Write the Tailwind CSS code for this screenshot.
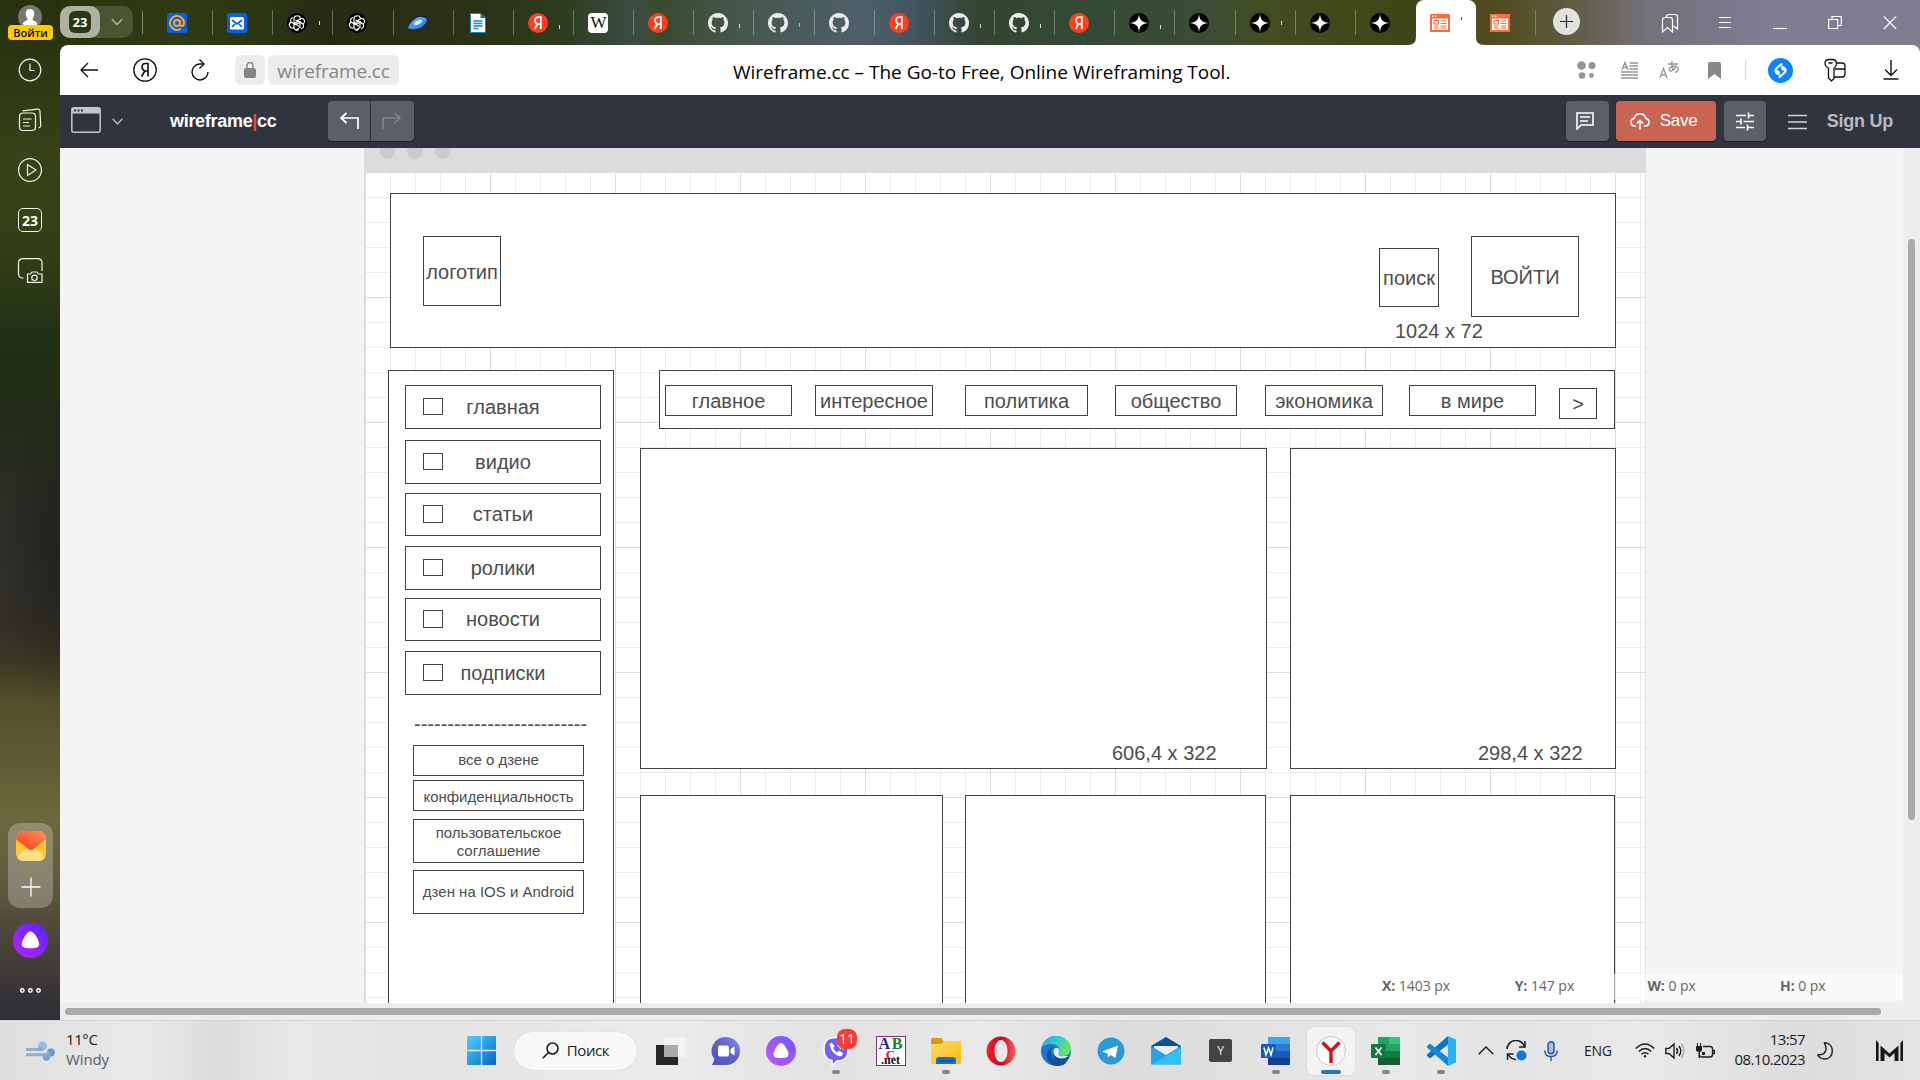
<!DOCTYPE html>
<html lang="ru">
<head>
<meta charset="utf-8">
<title>Wireframe.cc</title>
<script src="https://cdn.jsdelivr.net/npm/@tailwindcss/browser@4"></script>
</head>
<body class="w-[1920px] h-[1080px] overflow-hidden font-['Open_Sans','Noto_Sans',sans-serif]">
<svg class="absolute w-0 h-0">
  <defs>
    <linearGradient id="gw" x1="0" y1="0" x2="1" y2="1"><stop offset="0" stop-color="#4fd0ff"/><stop offset="1" stop-color="#0467c4"/></linearGradient>
    <linearGradient id="gal" x1="0" y1="1" x2="1" y2="0"><stop offset="0" stop-color="#b926ff"/><stop offset="1" stop-color="#5524ff"/></linearGradient>
    <linearGradient id="gal2" x1="0" y1="1" x2="1" y2="0"><stop offset="0" stop-color="#c455ff"/><stop offset="1" stop-color="#6a5cff"/></linearGradient>
    <linearGradient id="gop" x1="0" y1="0" x2="1" y2="0"><stop offset="0" stop-color="#fb1b35"/><stop offset=".5" stop-color="#c00c1d"/><stop offset="1" stop-color="#ff5a5a"/></linearGradient>
    <linearGradient id="ged" x1="0" y1="0" x2="1" y2=".4"><stop offset="0" stop-color="#2aa6e8"/><stop offset=".5" stop-color="#33c8d8"/><stop offset="1" stop-color="#6ce55a"/></linearGradient>
    <linearGradient id="gch" x1="0" y1="1" x2="1" y2="0"><stop offset="0" stop-color="#4453c4"/><stop offset=".6" stop-color="#6a62c8"/><stop offset="1" stop-color="#7fa0ee"/></linearGradient>
    <linearGradient id="gfo" x1="0" y1="0" x2="1" y2="1"><stop offset="0" stop-color="#ffdc66"/><stop offset="1" stop-color="#f9b916"/></linearGradient>
    <linearGradient id="gyd" x1="0" y1="0" x2="1" y2="1"><stop offset="0" stop-color="#6fbcff"/><stop offset="1" stop-color="#1574f0"/></linearGradient>
    <linearGradient id="gmr" x1="0" y1="1" x2="1" y2="0"><stop offset="0" stop-color="#fb3a12"/><stop offset="1" stop-color="#fb9060"/></linearGradient>
    <symbol id="ya" viewBox="0 0 20 20"><circle cx="10" cy="10" r="10" fill="#fc3f1d"/><path d="M12.800 16V4.200H10.300C8.200 4.200 7 5.500 7 7.400c0 1.700.8 2.600 2.300 3.600L6.600 16M12.700 11.200H10" fill="none" stroke="#fff" stroke-width="1.800"/></symbol>
    <symbol id="gh" viewBox="0 0 16 16"><path fill="#ececec" d="M8 0C3.580 0 0 3.580 0 8c0 3.540 2.290 6.530 5.470 7.590.4.07.55-.17.55-.38 0-.19-.01-.82-.01-1.490-2.010.37-2.530-.49-2.690-.94-.09-.23-.48-.94-.82-1.130-.28-.15-.68-.52-.01-.53.63-.01 1.080.58 1.230.82.72 1.210 1.870.87 2.330.66.07-.52.28-.87.51-1.070-1.780-.2-3.640-.89-3.640-3.950 0-.87.31-1.590.82-2.150-.08-.2-.36-1.020.08-2.120 0 0 .67-.21 2.200.82.64-.18 1.320-.27 2-.27s1.360.09 2 .27c1.530-1.040 2.200-.82 2.200-.82.44 1.100.16 1.920.08 2.120.51.56.82 1.270.82 2.150 0 3.070-1.870 3.750-3.650 3.950.29.25.54.73.54 1.480 0 1.070-.01 1.930-.01 2.200 0 .21.15.46.55.38A8.010 8.010 0 0 0 16 8c0-4.420-3.580-8-8-8z"/></symbol>
    <symbol id="star" viewBox="0 0 20 20"><circle cx="10" cy="10" r="10" fill="#000"/><path d="M10 0c.2 7 3 9.800 10 10-7 .2-9.800 3-10 10-.2-7-3-9.800-10-10 7-.2 9.800-3 10-10z" fill="#fff"/></symbol>
    <symbol id="gpt" viewBox="0 0 20 20"><circle cx="10" cy="10" r="10" fill="#000"/><g fill="none" stroke="#fff" stroke-width="1.200"><path d="M10 2.800a3 3 0 0 0-3 3v4.400l5 3M6 4.500a3 3 0 0 0-2 4.500l4.500 2.600 5.500-3M3.700 9.500a3 3 0 0 0 2 5.500l1.300-.3M7 11v3.500a3 3 0 0 0 4.800 2M9 17l4-2.500V9.500L8.500 7M14 15.700a3 3 0 0 0 2.200-4.500L11.500 8l-4.500 2.600M16.500 10.600a3 3 0 0 0-1.800-5.300L10 7.800M10 2.800a3 3 0 0 1 3.300 2.500"/></g></symbol>
    <symbol id="wf" viewBox="0 0 20 18"><path d="M0 0h20v18H0z" fill="#f0713f"/><path d="M2 4.500h16V16H2z" fill="#fff"/><path d="M2 1.500h1.500v1.200H2zM5 1.500h1.500v1.200H5z" fill="#fff"/><path d="M4 6.500h4.500V10H4zM10.500 7h6M10.500 9.500h6M4 12h4.500M10.500 12h6M4 14h4.500M10.500 14h6" fill="none" stroke="#f0713f" stroke-width="1.100"/></symbol>
  </defs>
</svg>

<div class="flex flex-col h-full">
<div class="flex h-[1020px]">

<!-- browser side panel -->
<aside class="w-[60px] h-full shrink-0 flex flex-col items-center text-white bg-[radial-gradient(ellipse_60px_160px_at_60px_560px,#00000048,#00000000),linear-gradient(180deg,#27300f_0%,#2c3812_7%,#384117_15%,#354116_22%,#2b3817_29%,#212f16_33%,#212b18_41%,#2c2d25_49%,#302f2a_56%,#322f27_61%,#3c3925_65%,#54502b_69%,#615b34_75%,#6d683c_80%,#625b40_86%,#48413a_93%,#323036_99%)]">
  <div class="relative h-[41px] w-full flex flex-col items-center pt-[5px] shrink-0">
    <svg class="w-6 h-6 shrink-0" viewBox="0 0 24 24"><circle cx="12" cy="12" r="12" fill="#77786f"/><path d="M12 4c3 0 4.500 2 4.300 5-.2 2.500-1.500 3.500-1.800 5 0 2 3.500 2 5 4.500C17 23 7 23 4.500 18.500c1.500-2.500 5-2.500 5-4.500-.3-1.500-1.600-2.500-1.800-5C7.500 6 9 4 12 4z" fill="#fff"/></svg>
    <div class="absolute left-2 top-[25px] w-[45px] h-[15px] rounded bg-[#fecb00] text-black text-[11px] font-semibold leading-[16px] text-center">Войти</div>
  </div>
  <div class="flex flex-col items-center mt-[17px]">
    <svg class="h-6 w-6 mb-[26px]" viewBox="0 0 24 24" fill="none" stroke="#f2f4ea" stroke-width="1.200"><circle cx="12" cy="12" r="10.800"/><path d="M12 5.500V12.500h4.500"/></svg>
    <svg class="h-6 w-6 mb-[26px]" viewBox="0 0 24 24" fill="none" stroke="#f2f4ea" stroke-width="1.200"><rect x="1.500" y="5" width="16" height="17.500" rx="3.500"/><path d="M4.500 2.800L19.500 1.200Q22 1 22 3.500l.7 14q0 2-2 2.300M5 11h8.500M5 14.500h6M5 18h7"/></svg>
    <svg class="h-6 w-6 mb-[26px]" viewBox="0 0 24 24" fill="none" stroke="#f2f4ea" stroke-width="1.200"><circle cx="12" cy="12" r="11.400"/><path d="M9.500 6.500v11l8.500-5.500z"/></svg>
    <div class="h-6 w-6 mb-[26px] border border-[#f2f4ea] rounded-[5px] text-[14px] font-bold leading-[23px] text-center">23</div>
    <svg class="h-[26px] w-[26px]" viewBox="0 0 26 26" fill="none" stroke="#f2f4ea" stroke-width="1.200"><path d="M6.500 20H6q-4.500 0-4.500-4.500V5Q1.500.7 6 .7h14.500Q25 .7 25 5v8"/><path d="M10.500 16h3l1.500-2h5l1.500 2h3.500v8.300H10.500z"/><circle cx="17.500" cy="19.800" r="2.700"/></svg>
  </div>
  <div class="mt-[539px] w-[45px] h-[85px] ml-[1px] rounded-xl bg-white/25 flex flex-col items-center pt-2">
    <svg class="w-[30px] h-[30px]" viewBox="0 0 30 30"><rect width="30" height="30" rx="8" fill="#ffc535"/><path d="M1 26L12 16h6l11 10q-2 4-7 4H8q-5 0-7-4z" fill="#ffdf82"/><path d="M0 8Q1 0 8 0h14q7 0 8 8L17 18.500q-2 1.300-4 0z" fill="url(#gmr)"/></svg>
    <svg class="w-5 h-5 mt-[16px]" viewBox="0 0 20 20" stroke="#fff" stroke-width="1.300"><path d="M10 .5v19M.5 10h19"/></svg>
  </div>
  <svg class="w-[35px] h-[35px] mt-[15px] ml-[1px] shrink-0" viewBox="0 0 35 35"><circle cx="17.500" cy="17.500" r="17.500" fill="url(#gal)"/><path d="M17.500 8.300c3.500 0 8.700 9 8.700 13 0 2.800-2.500 4-8.700 4s-8.700-1.200-8.700-4c0-4 5.200-13 8.700-13z" fill="#fff"/></svg>
  <svg class="w-6 h-6 mt-5 shrink-0" viewBox="0 0 24 24" fill="none" stroke="#fff" stroke-width="1.500"><circle cx="4.300" cy="12.500" r="1.700"/><circle cx="12.400" cy="12.500" r="1.700"/><circle cx="20.500" cy="12.500" r="1.700"/></svg>
</aside>

<div class="w-[1860px] h-full flex flex-col bg-[linear-gradient(90deg,#2a350f_0px,#2f3b12_130px,#2c3614_200px,#262a12_270px,#2b3316_420px,#2e3c1c_500px,#3a4c44_575px,#3a4a30_600px,#46574c_680px,#4e5f6a_800px,#435560_850px,#334530_920px,#344a34_1040px,#3c4c36_1150px,#424c1e_1210px,#404518_1350px,#534c20_1440px,#5a5638_1490px,#74717a_1590px,#7f7b92_1700px,#807c90_1860px)]">
  <!-- tab strip -->
  <div class="h-[45px] flex items-start shrink-0">
    <div class="mt-1.5 w-[73px] h-8 rounded-[10px] bg-white/15 flex items-center">
      <div class="w-10 h-8 rounded-[10px] bg-white/55 flex items-center justify-center">
        <div class="w-[22px] h-[22px] rounded-md bg-[#2a3712] text-white text-[13px] font-bold leading-[22px] text-center">23</div>
      </div>
      <svg class="w-3 h-2 ml-[11px]" viewBox="0 0 12 8" fill="none" stroke="#b5b9a9" stroke-width="1.300"><path d="M.8 1L6 6.500 11.200 1"/></svg>
    </div>
    <div class="ml-[9px] mt-[11px] w-px h-[23px] bg-white/40"></div>
    <div class="ml-2.5 flex w-[1263px] shrink-0 h-[45px] [&>div]:flex-1 [&>div]:flex [&>div]:items-center [&>div]:pl-[14px] [&>div]:h-[25px] [&>div]:mt-2.5 [&>div]:border-r [&>div]:border-white/30 [&_svg]:w-5 [&_svg]:h-5">
      <div><svg viewBox="0 0 20 20"><rect width="20" height="20" rx="2.500" fill="#0a5fe0"/><g fill="none" stroke="#f7a52b" stroke-width="2"><circle cx="10" cy="10" r="3"/><path d="M13 7v4.500q0 1.500 1.700 1.500c1.500 0 2.300-1.200 2.300-3a7 7 0 1 0-3 5.700"/></g></svg></div>
      <div><svg viewBox="0 0 20 20"><rect width="20" height="20" rx="2.500" fill="#0a5fe0"/><rect x="3" y="4" width="14" height="12.500" rx="1.500" fill="#fff"/><path d="M5 7l5 4 5-4M5 14l3-3M15 14l-3-3" fill="none" stroke="#0a5fe0" stroke-width="1.700"/></svg></div>
      <div><svg><use href="#gpt"/></svg><i class="ml-3 w-px h-1 bg-white/80"></i></div>
      <div><svg><use href="#gpt"/></svg></div>
      <div><svg viewBox="0 0 20 20"><path d="M5 7Q10 2 15 3q4 0 4 3l-3 4z" fill="#0c1424"/><path d="M0 15C3 8 9 3 14 4c6 0 6 4 2 8-5 5-12 5-16 3z" fill="url(#gyd)"/><ellipse cx="10" cy="9.500" rx="4.500" ry="2" transform="rotate(-28 10 9.500)" fill="#fff" opacity=".8"/></svg></div>
      <div><svg viewBox="0 0 20 20"><path d="M2.500.5h10l5 4.500v14.500h-15z" fill="#fff" stroke="#1b87b9"/><path d="M12.500 0l5.500 5h-5.500z" fill="#1b6c9c"/><path d="M5.500 8h9M5.500 10.500h9M5.500 13h9M5.500 15.500h5" stroke="#1b87b9" stroke-width="1.300"/></svg></div>
      <div><svg><use href="#ya"/></svg><i class="ml-[11px] mt-2 w-px h-1 bg-white/80"></i></div>
      <div><span class="w-5 h-5 rounded bg-white text-[#111] text-[17px] leading-[20px] text-center font-['Liberation_Serif',serif] tracking-tighter">W</span></div>
      <div><svg><use href="#ya"/></svg></div>
      <div><svg><use href="#gh"/></svg><i class="ml-[11px] mt-1.5 w-px h-1 bg-white/80"></i></div>
      <div><svg><use href="#gh"/></svg><i class="ml-[11px] mt-1 w-px h-1 bg-white/60"></i></div>
      <div><svg><use href="#gh"/></svg></div>
      <div><svg><use href="#ya"/></svg></div>
      <div><svg><use href="#gh"/></svg><i class="ml-[11px] mt-1.5 w-px h-1 bg-white/80"></i></div>
      <div><svg><use href="#gh"/></svg><i class="ml-[11px] mt-1.5 w-px h-1 bg-white/80"></i></div>
      <div><svg><use href="#ya"/></svg></div>
      <div><svg><use href="#star"/></svg><i class="ml-[11px] mt-2 w-px h-1 bg-white/80"></i></div>
      <div><svg><use href="#star"/></svg></div>
      <div><svg><use href="#star"/></svg><i class="ml-[11px] w-px h-1 bg-white/80"></i></div>
      <div><svg><use href="#star"/></svg></div>
      <div class="border-transparent!"><svg><use href="#star"/></svg></div>
    </div>
    <div class="relative w-[60px] h-[45px] bg-white rounded-t-lg flex items-center pl-3.5 shrink-0">
      <svg class="absolute -left-2 bottom-0 w-2 h-2" viewBox="0 0 8 8"><path d="M8 0v8H0q8 0 8-8z" fill="#fff"/></svg>
      <svg class="absolute -right-2 bottom-0 w-2 h-2" viewBox="0 0 8 8"><path d="M0 0v8h8Q0 8 0 0z" fill="#fff"/></svg>
      <svg class="w-5 h-[18px]"><use href="#wf"/></svg><i class="ml-[11px] -mt-2 w-px h-[3px] bg-black/70"></i>
    </div>
    <div class="w-[60px] h-[25px] mt-2.5 pl-3.5 flex items-center border-r border-white/25"><svg class="w-5 h-[18px]"><use href="#wf"/></svg></div>
    <div class="ml-[17px] mt-2 w-[27px] h-[27px] rounded-full bg-[#e2e2dc] flex items-center justify-center"><svg class="w-[13px] h-[13px]" viewBox="0 0 13 13" stroke="#222" stroke-width="1.200"><path d="M6.500 0v13M0 6.500h13"/></svg></div>
    <div class="ml-[81px] mt-3 flex items-center text-white [&>svg]:h-[22px] [&>svg]:fill-none [&>svg]:stroke-white [&>svg]:stroke-[1.200]">
      <svg class="w-[18px]" viewBox="0 0 18 22"><path d="M1.500 8q0-2.500 2.500-2.500h5q2.500 0 2.500 2.500v12l-5-4.500-5 4.500zM5.500 5.500V5q0-2.500 2.500-2.500h6q2.500 0 2.500 2.500v12l-4-3"/></svg>
      <svg class="w-[14px] ml-[39px]" viewBox="0 0 14 22"><path d="M1 5.500h12M1 10.500h12M1 15.500h12"/></svg>
      <svg class="w-[14px] ml-[41px]" viewBox="0 0 14 22"><path d="M0 16.500h14"/></svg>
      <svg class="w-[14px] ml-[41px]" viewBox="0 0 14 22"><path d="M.6 7.500h9v9h-9zM4 7V4.500h9.300v9H10"/></svg>
      <svg class="w-[14px] ml-[41px]" viewBox="0 0 14 22"><path d="M.8 4.300L13.200 17M13.200 4.300L.8 17"/></svg>
    </div>
  </div>

  <!-- address bar -->
  <div class="h-[50px] bg-white rounded-t-[8px] flex items-center shrink-0">
    <svg class="w-[18px] h-4 ml-5" viewBox="0 0 18 16" fill="none" stroke="#111" stroke-width="1.300"><path d="M18 8H1M8 1L1 8l7 7"/></svg>
    <svg class="w-6 h-6 ml-[35px]" viewBox="0 0 24 24" fill="none" stroke="#111" stroke-width="1.300"><circle cx="12" cy="12" r="11.200"/><path d="M15 18.500V5.500h-2.500C10.200 5.500 9 7 9 9s1 3 2.800 4L8.600 18.500M15 13h-3" stroke-width="1.600"/></svg>
    <svg class="w-[22px] h-[24px] ml-[32px]" viewBox="0 0 22 24" fill="none" stroke="#111" stroke-width="1.400"><path d="M13.500 6H10.500A8 8 0 1 0 19 14M10.500 1.500L15 6l-4.500 4.500"/></svg>
    <div class="ml-[24px] w-[30px] h-[30px] rounded-md bg-[#ececec] flex items-center justify-center"><svg class="w-3 h-4" viewBox="0 0 12 16"><rect y="6" width="12" height="10" rx="2" fill="#858585"/><path d="M3 7V3.500a3 3 0 0 1 6 0V7" fill="none" stroke="#858585" stroke-width="1.400"/></svg></div>
    <div class="ml-[3px] w-[131px] h-[30px] rounded-md bg-[#ececec] text-[#868686] text-[19px] leading-[33px] text-center whitespace-nowrap tracking-[-0.15px]">wireframe.cc</div>
    <div class="ml-[334px] w-[500px] pt-[3px] text-[19px] text-black whitespace-nowrap tracking-[-0.02px] leading-[30px]">Wireframe.cc – The Go-to Free, Online Wireframing Tool.</div>
    <svg class="ml-[344px] w-[19px] h-5" viewBox="0 0 19 20" fill="#949494"><circle cx="4.500" cy="5.500" r="4.300"/><circle cx="15" cy="5.500" r="3.500"/><circle cx="5" cy="15.500" r="3.200"/><circle cx="14.500" cy="15.500" r="2.400"/></svg>
    <svg class="ml-[25px] w-[17px] h-[18px]" viewBox="0 0 17 18" fill="none" stroke="#949494" stroke-width="1.300"><path d="M1 9L4 1.500 7 9M2 6.500h4M8.500 2H17M8.500 5H17M8.500 8H17M0 11h17M0 14h17M0 17h17"/></svg>
    <svg class="ml-[21px] w-[21px] h-5" viewBox="0 0 21 20" fill="none" stroke="#949494" stroke-width="1.300"><path d="M1 18L4.500 8.500 8 18M2.200 15h4.600M9 4h10M13 1q-.5 6 1 9M17.500 5.500C16 10 12 12 10.500 10.500 9 8 14 5.500 17 6.500c3.500 1 3 5-1 6"/></svg>
    <svg class="ml-7 w-[13px] h-[17px]" viewBox="0 0 13 17"><path d="M0 2q0-2 2-2h9q2 0 2 2v15l-6.500-5L0 17z" fill="#888"/></svg>
    <div class="ml-6 w-px h-5 bg-gray-300"></div>
    <svg class="ml-[22px] w-[25px] h-[25px]" viewBox="0 0 25 25"><circle cx="12.500" cy="12.500" r="12.500" fill="#0a84ff"/><path d="M10.800 16.300C7 15 6.500 11.800 9 9.800L13.500 6M14.200 8.700c3.800 1.300 4.300 4.500 1.800 6.500L11.500 19M9.500 13.200l1.300 1.200M15.500 11.800l-1.300-1.200" fill="none" stroke="#fff" stroke-width="2.200" stroke-linecap="round"/></svg>
    <svg class="ml-[30px] w-[24px] h-[24px]" viewBox="0 0 24 24" fill="none" stroke="#111" stroke-width="1.300"><path d="M6.500 1.500h3q4 0 4 4 0 3-2.500 4.500v10.500L8.500 23 5.500 20V10Q2 8.500 2 5q0-3.500 4.500-3.500zM5.500 5h4M13.500 5H19q3 0 3 3v8q0 3-3 3h-8M12 11h10"/></svg>
    <svg class="ml-[36px] w-4 h-5" viewBox="0 0 16 20" fill="none" stroke="#111" stroke-width="1.400"><path d="M8 0v15M2 9.500l6 6 6-6M.5 19h15"/></svg>
  </div>

  <!-- editor toolbar -->
  <div class="h-[53px] bg-[#30343f] flex items-start pt-1.5 shrink-0 font-['Liberation_Sans',sans-serif]">
    <svg class="ml-[11px] mt-1.5 w-[30px] h-[26px]" viewBox="0 0 30 26"><rect x=".8" y=".8" width="28.400" height="24.400" rx="2" fill="none" stroke="#c3c7cc" stroke-width="1.500"/><path d="M1 1h28v5.500H1z" fill="#c3c7cc"/><path d="M3 2.500h2v2H3zM6.500 2.500h2v2h-2zM10 2.500h2v2h-2z" fill="#30343f"/></svg>
    <svg class="ml-[11px] mt-[17px] w-[11px] h-[7px]" viewBox="0 0 11 7" fill="none" stroke="#b8bcc4" stroke-width="1.300"><path d="M.7.7L5.500 6 10.300.7"/></svg>
    <div class="ml-[47px] w-[158px] text-[18px] leading-[40px] font-bold text-white tracking-[-0.3px] whitespace-nowrap">wireframe<span class="text-[#e0533f]">|</span>cc</div>
    <div class="w-[42px] h-10 rounded-l bg-[#5c5f68] shadow-[0_1px_1px_#1b1d23] flex items-center justify-center"><svg class="w-5 h-[18px] ml-0.5" viewBox="0 0 20 18" fill="none" stroke="#fff" stroke-width="1.700"><path d="M6.500 1L1 6l5.500 5M1 6h17v11"/></svg></div>
    <div class="ml-px w-[43px] h-10 rounded-r bg-[#5c5f68] shadow-[0_1px_1px_#1b1d23] flex items-center justify-center"><svg class="w-5 h-[18px] -ml-1" viewBox="0 0 20 18" fill="none" stroke="#83868d" stroke-width="1.600"><path d="M13.500 1L19 6l-5.500 5M19 6H2v11"/></svg></div>
    <div class="ml-auto w-[43px] h-10 rounded bg-[#5c5f68] shadow-[0_1px_1px_#1b1d23] flex items-center justify-center"><svg class="w-[18px] h-[18px] -ml-1" viewBox="0 0 18 18" fill="none" stroke="#fff" stroke-width="1.600"><path d="M1 1h16v12H5l-4 4zM4 5h10M4 9h8"/></svg></div>
    <div class="ml-[7px] w-[100px] h-10 rounded bg-[#c76552] shadow-[0_1px_1px_#1b1d23] flex items-center pl-3.5 text-white text-[17px] tracking-[-0.3px]"><svg class="w-5 h-[18px] mr-[10px]" viewBox="0 0 20 18" fill="none" stroke="#fff" stroke-width="1.600"><path d="M6 14H4.500A3.800 3.800 0 0 1 4 6.500 6.200 6.200 0 0 1 16 6.500 3.800 3.800 0 0 1 15.500 14H14M10 17.500V8.500M6.800 11.500L10 8.300l3.200 3.200"/></svg>Save</div>
    <div class="ml-2 w-[42px] h-10 rounded bg-[#5c5f68] shadow-[0_1px_1px_#1b1d23] flex items-center justify-center"><svg class="w-[18px] h-[19px]" viewBox="0 0 18 19" fill="none" stroke="#fff" stroke-width="1.600"><path d="M0 3.500h10M12.500 3.500H18M12.500.5v6M0 9.500h5M7.500 9.500H18M5 6.500v6M0 15.500h9M11.500 15.500H18M11.500 12.500v6"/></svg></div>
    <svg class="ml-[22px] mt-[13px] w-[19px] h-4" viewBox="0 0 19 16" stroke="#d0d2d6" stroke-width="1.600"><path d="M0 1.500h19M0 8h19M0 14.500h19"/></svg>
    <div class="ml-5 mr-[27px] text-[18px] leading-[40px] font-bold text-[#b9bbc0] tracking-[-0.25px] whitespace-nowrap">Sign Up</div>
  </div>

  <!-- wireframe canvas -->
  <div class="flex h-[855px] shrink-0">
    <div class="relative w-[1843px] bg-[#f4f4f4] overflow-hidden font-['Liberation_Sans',sans-serif] text-[20px] leading-[23px] text-[#4d4d4d] [&_b]:absolute [&_b]:font-normal [&_b]:bg-white [&_b]:border [&_b]:border-[#424242] [&_b]:flex [&_b]:items-center [&_b]:justify-center [&_b]:text-center [&_b]:whitespace-nowrap">
      <div class="absolute left-[304px] top-0 w-[1282px] h-[25px] bg-[#dcdcdc] overflow-hidden">
        <div class="flex gap-[12px] pl-4 -mt-1"><i class="w-[15px] h-[15px] rounded-full bg-[#cacaca]"></i><i class="w-[16px] h-[15px] rounded-full bg-[#cacaca]"></i><i class="w-[15px] h-[15px] rounded-full bg-[#cacaca]"></i></div>
      </div>
      <div class="absolute left-[304px] top-[25px] w-[1282px] h-[830px] bg-white border-x border-[#dedede]">
        <svg class="w-full h-full" shape-rendering="crispEdges"><defs>
          <pattern id="gmin" x="0" y="24" width="25" height="25" patternUnits="userSpaceOnUse"><path d="M0 .5H25M.5 0V25" stroke="#ececec"/></pattern>
          <pattern id="gmaj" x="0" y="124" width="125" height="125" patternUnits="userSpaceOnUse"><path d="M0 .5H125M.5 0V125" stroke="#dcdcdc"/></pattern></defs>
          <rect width="1280" height="830" fill="url(#gmin)"/><rect width="1280" height="830" fill="url(#gmaj)"/></svg>
      </div>
      <!-- header -->
      <b class="left-[330px] top-[45px] w-[1226px] h-[155px]"></b>
      <b class="left-[363px] top-[88px] w-[78px] h-[70px] pt-[3px]">логотип</b>
      <b class="left-[1319px] top-[100px] w-[60px] h-[59px] pt-0.5">поиск</b>
      <b class="left-[1411px] top-[88px] w-[108px] h-[81px] pt-0.5">ВОЙТИ</b>
      <span class="absolute left-[1335px] top-[172px]">1024 x 72</span>
      <!-- side menu -->
      <b class="left-[328px] top-[222px] w-[226px] h-[700px]"></b>
      <b class="left-[345px] top-[237px] w-[196px] h-[44px]">главная</b><b class="left-[363px] top-[250px] w-5 h-[17px]"></b>
      <b class="left-[345px] top-[292px] w-[196px] h-[44px]">видио</b><b class="left-[363px] top-[305px] w-5 h-[17px]"></b>
      <b class="left-[345px] top-[345px] w-[196px] h-[43px]">статьи</b><b class="left-[363px] top-[357px] w-5 h-[18px]"></b>
      <b class="left-[345px] top-[398px] w-[196px] h-[44px]">ролики</b><b class="left-[363px] top-[411px] w-5 h-[17px]"></b>
      <b class="left-[345px] top-[450px] w-[196px] h-[43px]">новости</b><b class="left-[363px] top-[462px] w-5 h-[18px]"></b>
      <b class="left-[345px] top-[503px] w-[196px] h-[44px]">подписки</b><b class="left-[363px] top-[516px] w-5 h-[17px]"></b>
      <span class="absolute left-[354px] top-[565px]">--------------------------</span>
      <b class="left-[353px] top-[597px] w-[171px] h-[31px] text-[15px] pb-0.5">все о дзене</b>
      <b class="left-[353px] top-[632px] w-[171px] h-[31px] text-[15px] pt-0.5">конфиденциальность</b>
      <b class="left-[353px] top-[671px] w-[171px] h-[44px] text-[15px] leading-[18px] pt-0.5">пользовательское<br>соглашение</b>
      <b class="left-[353px] top-[722px] w-[171px] h-[44px] text-[15px] pb-0.5">дзен на IOS и Android</b>
      <!-- categories -->
      <b class="left-[599px] top-[222px] w-[956px] h-[59px]"></b>
      <b class="left-[605px] top-[237px] w-[127px] h-[31px] pt-0.5">главное</b>
      <b class="left-[755px] top-[237px] w-[118px] h-[31px] pt-0.5">интересное</b>
      <b class="left-[905px] top-[237px] w-[123px] h-[31px] pt-0.5">политика</b>
      <b class="left-[1055px] top-[237px] w-[122px] h-[31px] pt-0.5">общество</b>
      <b class="left-[1205px] top-[237px] w-[118px] h-[31px] pt-0.5">экономика</b>
      <b class="left-[1349px] top-[237px] w-[127px] h-[31px] pt-0.5">в мире</b>
      <b class="left-[1499px] top-[240px] w-[38px] h-[31px] pt-0.5">&gt;</b>
      <!-- cards -->
      <b class="left-[580px] top-[300px] w-[627px] h-[321px]"></b>
      <span class="absolute left-[1052px] top-[594px]">606,4 x 322</span>
      <b class="left-[1230px] top-[300px] w-[326px] h-[321px]"></b>
      <span class="absolute left-[1418px] top-[594px]">298,4 x 322</span>
      <b class="left-[580px] top-[647px] w-[303px] h-[300px]"></b>
      <b class="left-[905px] top-[647px] w-[301px] h-[300px]"></b>
      <b class="left-[1230px] top-[647px] w-[325px] h-[300px]"></b>
      <!-- pointer read-out -->
      <div class="absolute left-[1308px] top-[826px] w-[540px] h-[26px] bg-white/55 flex pl-[14px] font-['Open_Sans',sans-serif] text-[14px] leading-[24px] text-[#666] tracking-[-0.05px] [&>div]:w-[132.700px] [&>div]:shrink-0">
        <div><strong>X:</strong> 1403 px</div><div><strong>Y:</strong> 147 px</div><div><strong>W:</strong> 0 px</div><div><strong>H:</strong> 0 px</div>
      </div>
    </div>
    <div class="w-[17px] bg-[#ededed] pt-[91px] pl-[5px]"><div class="w-[7px] h-[581px] rounded-full bg-[#a9a9a9]"></div></div>
  </div>
  <div class="h-[17px] shrink-0 bg-[#ededed] pt-[5px] pl-[5px]"><div class="w-[1816px] h-[7px] rounded-full bg-[#a9a9a9]"></div></div>
</div>
</div>

<!-- taskbar -->
<footer class="h-[60px] flex items-center border-t border-[#d4d4d4] text-[#1c1c1c] bg-[linear-gradient(90deg,#dfdfdf_0px,#e9e9e9_140px,#dcdcdc_220px,#e8e8e8_290px,#e3e3e3_420px,#ebebeb_660px,#e2e2e2_850px,#e9e9e9_980px,#dcdcdc_1120px,#e8e8e8_1400px,#e3e3e3_1500px,#e9e9e9_1640px,#dddddd_1800px,#e3e3e3_1920px)]">
  <svg class="ml-[26px] w-[29px] h-5 shrink-0" viewBox="0 0 29 20"><path d="M0 7h13V10H0zM0 12.300h22v3H0z" fill="#8fb0d0"/><circle cx="16.500" cy="5" r="4.500" fill="#9dbbd8"/><circle cx="25" cy="11.500" r="3.900" fill="#7199c0"/><circle cx="20.500" cy="16" r="3.700" fill="#7ba2c8"/><path d="M11 7l4-1 3 3-3 1h-4zM19 12.300l5-2v5h-5z" fill="#85a9cc"/></svg>
  <div class="ml-[11px] -mt-[3px] w-[398px] shrink-0 text-[15px] leading-5 tracking-[-0.4px]"><div>11°C</div><div class="text-[#5c5c5c] tracking-[-0.1px]">Windy</div></div>
  <svg class="ml-[3px] w-[29px] h-[29px] shrink-0" viewBox="0 0 29 29" fill="url(#gw)"><path d="M1 0h27q1 0 1 1v27q0 1-1 1H1q-1 0-1-1V1q0-1 1-1z"/><path d="M14.500 0v29M0 14.500h29" stroke="#e6e6e6" stroke-width="1.300"/></svg>
  <div class="ml-[18px] w-[123px] h-[38px] rounded-full bg-[#f8f8f8] shadow-[0_0_1px_#bbb] flex items-center justify-center gap-2 text-[15px] shrink-0 tracking-[-0.4px]"><svg class="w-[17px] h-[17px]" viewBox="0 0 17 17" fill="none" stroke="#1c1c1c" stroke-width="1.600"><circle cx="10.500" cy="6.500" r="5.500"/><path d="M6.500 10.500L.8 16.200"/></svg>Поиск</div>
  <div class="ml-[6px] flex shrink-0 h-[59px] [&>div]:relative [&>div]:w-[55px] [&>div]:flex [&>div]:items-center [&>div]:justify-center [&_svg]:w-[30px] [&_svg]:h-[30px] [&_i]:absolute [&_i]:bottom-[6px] [&_i]:h-1 [&_i]:w-2 [&_i]:rounded-full [&_i]:bg-[#858585]">
    <div><svg viewBox="0 0 30 30"><path d="M0 9h22v20H0z" fill="#272727"/><path d="M8 1h22v20H8z" fill="#f3f3f3"/><path d="M8 9h14v12H8z" fill="#aaa"/></svg></div>
    <div><svg viewBox="0 0 30 30"><path d="M15 1a14 14 0 1 1 0 28H1l2.500-5.500A14 14 0 0 1 15 1z" fill="url(#gch)"/><rect x="7" y="9.500" width="11" height="11" rx="2" fill="#fff"/><path d="M19.500 13l4-2.500v9l-4-2.500z" fill="#fff"/></svg></div>
    <div><svg viewBox="0 0 30 30"><circle cx="15" cy="15" r="15" fill="url(#gal2)"/><path d="M15 7c3 0 7.500 8 7.500 11.500 0 2.500-2 3.500-7.500 3.500s-7.500-1-7.500-3.500C7.500 15 12 7 15 7z" fill="#fff"/></svg></div>
    <div><svg viewBox="0 0 30 30"><path d="M15 1.500c8 0 12 3 12 12S23 25 16 25l-5 4.500V24.500C5 23.500 3 20 3 13.500c0-9 4-12 12-12z" fill="#7360f2" stroke="#fff" stroke-width="1.500"/><path d="M8.500 8.500l2-2 3 3.500-1.300 2.200q1.500 3 4.300 4l2-1.500 3.700 2.500q-1.200 3.500-3.700 3Q10.500 18 8.500 8.500z" fill="#fff"/><path d="M16 6.500q5.500 1 6 7M16.500 9.500q3 .5 3 3.500" fill="none" stroke="#fff" stroke-width="1.100"/></svg><i></i><span class="absolute left-[29px] top-2 w-5 h-5 rounded-[8px] bg-[#fb3b30] text-white text-[14px] leading-[19px] text-center">11</span></div>
    <div><span class="w-[30px] h-[30px] bg-white border border-[#8a2a86] font-['Liberation_Serif',serif] font-bold flex flex-col overflow-hidden"><span class="flex justify-between px-0.5 h-[13px] text-[16px] leading-[14px]"><span class="text-[#1c2a90]">A</span><span class="text-[#15802f]">B</span></span><span class="h-[7px] text-center text-[13px] leading-[9px] text-[#e01525]">C</span><span class="text-center text-[12px] leading-[6px] text-[#111]">.net</span></span></div>
    <div><svg viewBox="0 0 30 30"><path d="M0 3.500Q0 2 1.500 2H10l3 3.500V10H0z" fill="#d79a10"/><path d="M0 8h10l3-3h17v21.500q0 1.500-1.500 1.500h-27Q0 28 0 26.500z" fill="url(#gfo)"/><path d="M5 28v-4q0-3 3-3h14q3 0 3 3v4z" fill="#1272c4"/><path d="M8 25h14" stroke="#0a4a90" stroke-width="1.400"/></svg><i></i></div>
    <div><svg viewBox="0 0 30 30"><path fill-rule="evenodd" d="M15 .5a14.500 14.500 0 1 1 0 29 14.500 14.500 0 0 1 0-29zM15 4c-4 0-6.500 5-6.500 11S11 26 15 26s6.500-5 6.500-11S19 4 15 4z" fill="url(#gop)"/></svg></div>
    <div><svg viewBox="0 0 30 30"><circle cx="15" cy="15" r="15" fill="#1b77cf"/><path d="M.5 12C2 4.500 8 0 15 0c8 0 15 5.500 15 12.500 0 4.500-3.500 7.500-8 7.500-3.500 0-5-1-5-2 0-.8 1.500-1.500 1.500-4 0-3-3-6-8-6-4.500 0-8.500 2-10 4z" fill="url(#ged)"/><path d="M10 15c0 7 6 13 12 12.500 2 0 4-1 5-2C24.500 28.500 20 30 16 30 9 29.500 4 23 6.500 16 8 12.500 11 11 13.500 11 11.500 12 10 13.500 10 15z" fill="#12509c"/><path d="M12.500 15.500c0-2 1.500-4.500 4-3.500 2.500 1.500 2 3.500.8 5.500-.6 1.500 2 3.500 6 2.500h5c-3 4-8 5-12 3-2.500-1.500-3.800-4-3.800-7.500z" fill="#e4eef2"/><path d="M12.500 16c.5 5 6 7.500 11 6 2-.6 3.500-1.500 5-2.500-1 4-4 8-7 8.500-6 .5-10-6-9-12z" fill="#12509c"/></svg></div>
    <div><svg viewBox="0 0 30 30"><circle cx="15" cy="15" r="13.500" fill="#2a9ad6"/><path d="M6 15.500L22 9.500 19.500 22l-5-3-2.500 2.500-.5-4z" fill="#fff"/></svg></div>
    <div><svg viewBox="0 0 30 30"><path d="M0 10L15 1l15 9v5H0z" fill="#0c4f9b"/><path d="M3 10h24v10H3z" fill="#ededed"/><path d="M0 10l15 9 15-9v18.500H0z" fill="#2ba3ea"/><path d="M0 28.500L30 12v16.500z" fill="#35c0f5"/></svg></div>
    <div><span class="w-[23px] h-[23px] bg-[#444] rounded-[2px] text-[#eee] text-[12px] leading-[23px] text-center">Y</span></div>
    <div><svg viewBox="0 0 30 30"><path d="M7 1h22v7H7z" fill="#41a5ee"/><path d="M7 8h22v7H7z" fill="#2b7cd3"/><path d="M7 15h22v7H7z" fill="#185abd"/><path d="M7 22h22v7H7z" fill="#103f91"/><rect y="8" width="15" height="14" rx="1" fill="#185abd"/><path d="M3 11.500L5 19l2.500-7L10 19l2-7.500" fill="none" stroke="#fff" stroke-width="1.500"/></svg><i></i></div>
    <div><span class="w-12 h-12 rounded-md bg-[#f4f4f4] shadow-[0_0_1px_#aaa] flex items-center justify-center"><svg viewBox="0 0 30 30"><circle cx="15" cy="15" r="14.500" fill="#fafafa" stroke="#bbb" stroke-width=".8"/><path d="M6.500 6.500L15 15l8.500-8.500M15 14v13" fill="none" stroke="#cc1417" stroke-width="3.400"/></svg></span><i class="w-5! bg-[#1976d2]!"></i></div>
    <div><svg viewBox="0 0 30 30"><path d="M7 1h22v7H7z" fill="#33c481"/><path d="M7 1h11v7H7z" fill="#21a366"/><path d="M7 8h22v7H7z" fill="#21a366"/><path d="M7 15h22v7H7z" fill="#107c41"/><path d="M7 22h22v7H7z" fill="#185c37"/><rect y="8" width="15" height="14" rx="1" fill="#107c41"/><path d="M4.500 11.500l6 7.500M10.500 11.500l-6 7.500" stroke="#fff" stroke-width="1.700"/></svg><i></i></div>
    <div><svg viewBox="0 0 30 30"><path d="M22 0l8 3.500v23L22 30z" fill="#2fb0f5"/><path d="M22 0v8.500L4 22.500 1 20v-1.500z" fill="#0a74c4"/><path d="M22 30v-8.500L4 7.500 1 10v1.500z" fill="#1688d8"/></svg><i></i></div>
  </div>
  <svg class="ml-[10px] w-4 h-[9px] shrink-0" viewBox="0 0 16 9" fill="none" stroke="#1c1c1c" stroke-width="1.400"><path d="M.7 8.300L8 1l7.300 7.300"/></svg>
  <svg class="ml-3 w-[21px] h-[21px] shrink-0" viewBox="0 0 21 21" fill="none" stroke="#1c1c1c" stroke-width="1.500"><path d="M1 9A9 9 0 0 1 18.500 6.500M19 1v6h-6M1.500 20v-6h6M2 14q3 5.500 8 5.500"/><circle cx="15.500" cy="15.500" r="5" fill="#0f78d4" stroke="none"/></svg>
  <svg class="ml-[17px] w-[14px] h-5 shrink-0" viewBox="0 0 14 20" fill="none" stroke="#1f4fa0" stroke-width="1.400"><rect x="4" y=".8" width="6" height="12" rx="3" fill="#a9bce0"/><path d="M.8 9.500q0 6 6.200 6t6.200-6M7 15.500V20"/></svg>
  <div class="ml-[26px] w-[30px] text-[14px] shrink-0 tracking-[-0.3px]">ENG</div>
  <svg class="ml-[21px] w-5 h-[15px] shrink-0" viewBox="0 0 20 15" fill="none" stroke="#1c1c1c" stroke-width="1.500"><path d="M.8 5.500q9.200-9 18.400 0M3.800 8.500q6.200-6 12.400 0M6.500 11.300q3.500-3.200 7 0"/><circle cx="10" cy="13.300" r="1.200" fill="#1c1c1c" stroke="none"/></svg>
  <svg class="ml-2.5 w-5 h-[18px] shrink-0" viewBox="0 0 20 18" fill="none" stroke="#1c1c1c" stroke-width="1.400"><path d="M.8 6.500H4L9 2v14l-5-4.500H.8zM11.500 6q2 3 0 6M14 4q3.500 5 0 10"/><path d="M16.500 2q4.500 7 0 14" stroke="#aaa"/></svg>
  <svg class="ml-2.5 w-5 h-4 shrink-0" viewBox="0 0 20 16" fill="none" stroke="#1c1c1c" stroke-width="1.400"><path d="M8 3.500h7q2.500 0 2.500 2v6q0 2.500-2.500 2.500H7q-1.500 0-1.500-1.500M18 7.500h1.500v3H18"/><path d="M1 3h6v4q0 1.500-2 2v6H3.500V9Q1 8.500 1 7zM2 0h1v3H2zM5 0h1v3H5zM7 9h3v3H7z" fill="#1c1c1c" stroke="none"/></svg>
  <div class="ml-[12px] -mt-[4px] w-[78px] text-right text-[15px] leading-5 tracking-[-0.6px] shrink-0 whitespace-nowrap"><div>13:57</div><div>08.10.2023</div></div>
  <svg class="ml-3 w-4 h-[18px] shrink-0" viewBox="0 0 16 18" fill="none" stroke="#1c1c1c" stroke-width="1.400"><path d="M7.500.8C13 1 15.300 5 15.300 9c0 5-3.300 8-7.300 8-3.500 0-6-1.500-7.200-4 4 0 8-1 8.200-6C9 4.500 8 2.500 7.500.8z"/></svg>
  <svg class="ml-[43px] w-[27px] h-[21px] shrink-0" viewBox="0 0 27 21" fill="#161616"><path d="M0 0l2.600 3v18H0zM27 0l-2.600 3v18H27zM4.500 5.500l9 8 9-8V21h-4v-8l-5 4.500-5-4.500v8h-4z"/></svg>
</footer>
</div>
</body>
</html>
